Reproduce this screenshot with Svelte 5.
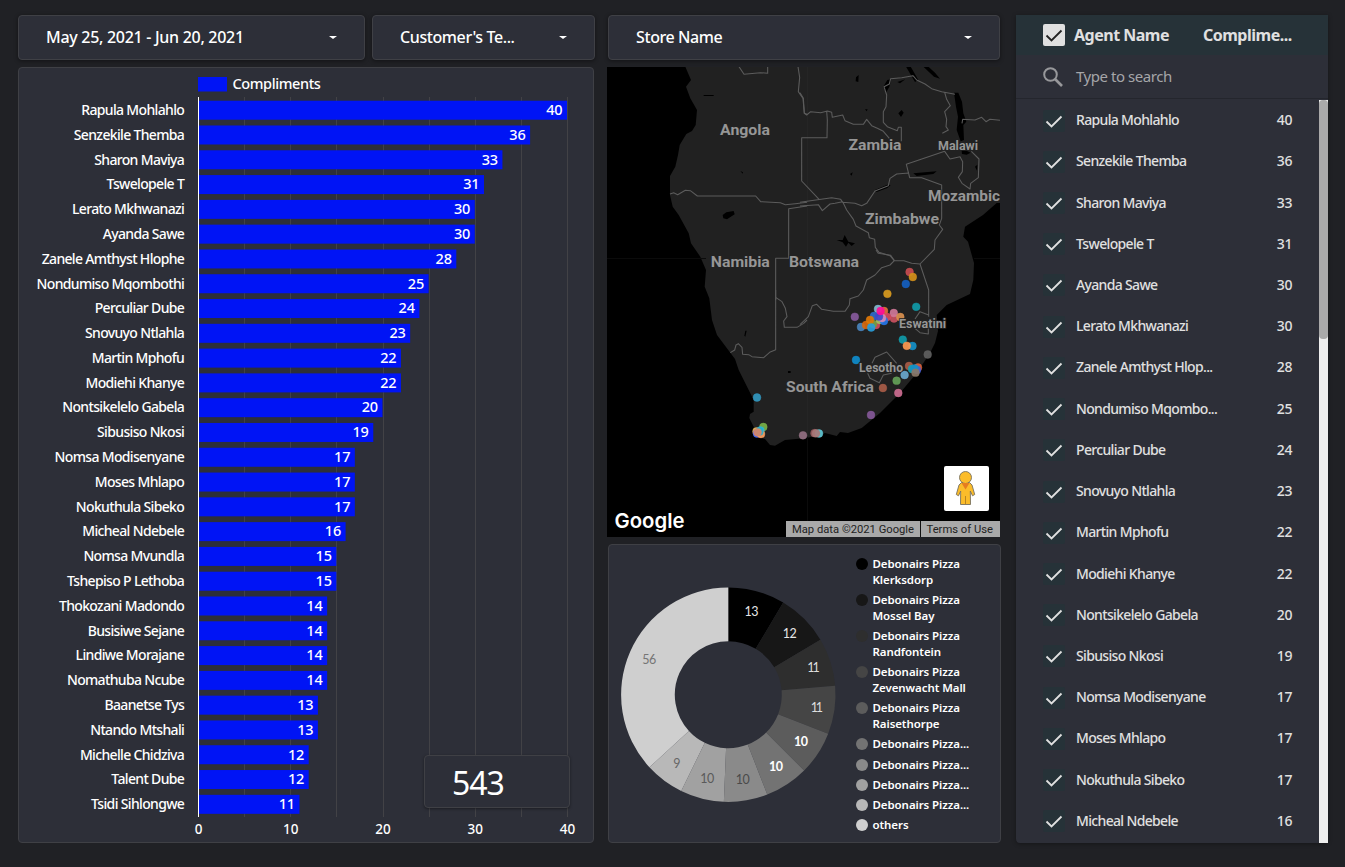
<script>
  const bars = [
    ['Rapula Mohlahlo', 40], ['Senzekile Themba', 36], ['Sharon Maviya', 33], ['Tswelopele T', 31],
    ['Lerato Mkhwanazi', 30], ['Ayanda Sawe', 30], ['Zanele Amthyst Hlophe', 28], ['Nondumiso Mqombothi', 25],
    ['Perculiar Dube', 24], ['Snovuyo Ntlahla', 23], ['Martin Mphofu', 22], ['Modiehi Khanye', 22],
    ['Nontsikelelo Gabela', 20], ['Sibusiso Nkosi', 19], ['Nomsa Modisenyane', 17], ['Moses Mhlapo', 17],
    ['Nokuthula Sibeko', 17], ['Micheal Ndebele', 16], ['Nomsa Mvundla', 15], ['Tshepiso P Lethoba', 15],
    ['Thokozani Madondo', 14], ['Busisiwe Sejane', 14], ['Lindiwe Morajane', 14], ['Nomathuba Ncube', 14],
    ['Baanetse Tys', 13], ['Ntando Mtshali', 13], ['Michelle Chidziva', 12], ['Talent Dube', 12], ['Tsidi Sihlongwe', 11]
  ];
  const x0 = 198.5, unit = 9.225, step = 24.79;
  const cy = (i) => 110 + i * step;

  const agents = [
    ['Rapula Mohlahlo', 40], ['Senzekile Themba', 36], ['Sharon Maviya', 33], ['Tswelopele T', 31],
    ['Ayanda Sawe', 30], ['Lerato Mkhwanazi', 30], ['Zanele Amthyst Hlop...', 28], ['Nondumiso Mqombo...', 25],
    ['Perculiar Dube', 24], ['Snovuyo Ntlahla', 23], ['Martin Mphofu', 22], ['Modiehi Khanye', 22],
    ['Nontsikelelo Gabela', 20], ['Sibusiso Nkosi', 19], ['Nomsa Modisenyane', 17], ['Moses Mhlapo', 17],
    ['Nokuthula Sibeko', 17], ['Micheal Ndebele', 16]
  ];

  const stores = [
    { n: 13, c: '#000000', t: '#e6e6e6', l: ['Debonairs Pizza', 'Klerksdorp'] },
    { n: 12, c: '#171717', t: '#e6e6e6', l: ['Debonairs Pizza', 'Mossel Bay'] },
    { n: 11, c: '#2e2e2e', t: '#dedede', l: ['Debonairs Pizza', 'Randfontein'] },
    { n: 11, c: '#454545', t: '#dedede', l: ['Debonairs Pizza', 'Zevenwacht Mall'] },
    { n: 10, c: '#5c5c5c', t: '#ffffff', b: true, l: ['Debonairs Pizza', 'Raisethorpe'] },
    { n: 10, c: '#737373', t: '#ffffff', b: true, l: ['Debonairs Pizza...'] },
    { n: 10, c: '#8a8a8a', t: '#4a4a4a', l: ['Debonairs Pizza...'] },
    { n: 10, c: '#a1a1a1', t: '#5a5a5a', l: ['Debonairs Pizza...'] },
    { n: 9, c: '#b8b8b8', t: '#666666', l: ['Debonairs Pizza...'] },
    { n: 56, c: '#cfcfcf', t: '#757575', l: ['others'] }
  ];
  const total = stores.reduce((s, d) => s + d.n, 0);
  const pt = (r, a) => [728.3 + r * Math.sin(a), 694.7 - r * Math.cos(a)];
  let acc = 0;
  const slices = stores.map((d) => {
    const a = (acc / total) * 2 * Math.PI;
    acc += d.n;
    const b = (acc / total) * 2 * Math.PI;
    const big = b - a > Math.PI ? 1 : 0;
    const R = 107.2, r = 53.5;
    return {
      ...d,
      d: `M${pt(R, a)}A${R} ${R} 0 ${big} 1 ${pt(R, b)}L${pt(r, b)}A${r} ${r} 0 ${big} 0 ${pt(r, a)}Z`,
      p: pt(d.n === 11 ? 88.5 : 86.6, (a + b) / 2)
    };
  });

  const places = [
    ['Angola', 745, 134.7, 50, 15], ['Zambia', 875, 150, 53, 15], ['Malawi', 958, 149.5, 40, 12],
    ['Zimbabwe', 902, 223.5, 74, 15], ['Namibia', 740.3, 266.5, 59, 15],
    ['Botswana', 824, 267, 70, 15], ['Eswatini', 922.5, 328, 47, 12], ['Lesotho', 881, 371.5, 44, 12],
    ['South Africa', 830, 392, 88, 15]
  ];

  const dots = [
    [909.6, 272, '#c84c50'], [912.8, 277, '#d4901a'], [905.8, 284, '#1560c0'], [887.4, 293.8, '#d99b20'],
    [854.8, 316.8, '#875a9c'], [916.2, 306.8, '#109aa8'], [894, 318.5, '#c85060'], [893.8, 313, '#d07898'],
    [900.3, 317, '#d9904f'], [861, 327, '#4a84bd'], [884, 311, '#e0703c'], [887, 317, '#d84a60'],
    [876, 325, '#d04a60'], [866, 325, '#d9680c'], [873, 324, '#70a040'], [878, 309, '#85b8d0'],
    [880, 320, '#9cc060'], [884, 321, '#2575e8'], [874, 316, '#2f6cc8'], [870, 320, '#e07808'],
    [871.2, 327.5, '#2a9cd8'], [882, 318, '#d58ab8'], [879, 316.5, '#4048c8'], [880.6, 311, '#ff0c98'],
    [902.8, 339.6, '#109aa8'], [912.5, 346, '#1590c8'], [906.8, 345.8, '#ff9a50'], [927.7, 354.5, '#606060'],
    [856, 360, '#0f8ccc'], [909, 366, '#a85c48'], [918, 367.5, '#d8603c'], [912, 369, '#18a0b0'],
    [917, 370, '#4060d8'], [914.5, 368.5, '#1590c8'], [915.5, 372.7, '#8a7868'], [904.6, 375, '#6aa8cc'],
    [896.6, 380.7, '#64a058'], [882.9, 388, '#a85c48'], [898.3, 393, '#cc6c90'], [871, 415, '#845898'],
    [757, 397.5, '#3298c0'], [763.3, 427, '#78b048'], [756.5, 431.5, '#e8b858'], [760.5, 430.5, '#2fb4d8'],
    [757, 433.5, '#5070f8'], [761, 434, '#ffa060'], [759.5, 431.5, '#20b0d0'], [757.6, 432.3, '#d88468'],
    [803, 435.3, '#927082'], [814.5, 433.2, '#985c60'], [819, 433.5, '#60c8d4'], [816, 433.3, '#a87878']
  ];
</script>

<main>
  <section class="left">
    <div class="filters">
      <div class="filter date"><span>May 25, 2021 - Jun 20, 2021</span><i></i></div>
      <div class="filter tel"><span>Customer's Te...</span><i></i></div>
    </div>
    <div class="panel chart">
      <svg width="574" height="774" viewBox="19 68 574 774">
        {#each [5, 10, 15, 20, 25, 30, 35, 40] as g}
          <rect x={Math.round(x0 + g * unit - 0.5)} y="97" width="1" height="720" fill="#424246" />
        {/each}
        {#each bars as [name, n], i}
          <rect x="198" y={cy(i) - 9.3} width={n * unit} height="19" fill="#0014f5" />
          <text x="184.2" y={cy(i) + 5} class="lab end">{name}</text>
          <text x={x0 + n * unit - 5} y={cy(i) + 5} class="val end">{n}</text>
        {/each}
        <rect x="198" y="97" width="1" height="720" fill="#fff" />
        <rect x="198" y="77" width="29" height="14.5" fill="#0014f5" />
        <text x="232.5" y="89" class="leg">Compliments</text>
        {#each [0, 10, 20, 30, 40] as g}
          <text x={x0 + g * unit} y="834" class="lab mid">{g}</text>
        {/each}
      </svg>
      <div class="score"><span>543</span></div>
    </div>
  </section>

  <section class="center">
    <div class="filter store"><span>Store Name</span><i></i></div>
    <div class="map">
      <svg width="393" height="470" viewBox="607 67 393 470">
        <rect x="607" y="67" width="393" height="470" fill="#000" />
        <path fill="#212121" d="M685.3 66.7L691 80 686 86.7 690.3 98.3 697 110 695.7 125 692 131 686.3 134 679.7 145 678 155 675.3 166.7 670 176 670 195 672.7 206.7 678.7 215 688.7 233.3 691 243.3 700.3 256.7 706 270 704.7 286.7 709.3 298.3 712 320 717 335 730.3 352.7 735 359 738.7 370 748.7 390 753.7 400 753.7 411.7 750 414 749.3 418 753.7 426.7 754 436 765 439 770 445 775 445.7 785 440 807 438 825 433 836.7 436 840 432 848 433 861.7 428 880 413 900 393 916.7 373 930 353 935 343 938 331 936.7 315 946.7 305 970 294 973.3 280 974 263 968 241.7 963.3 236.7 965 226.7 983 215 996.7 203 1000 203 1000 66Z" />
        <path stroke="#0b0b0b" d="M807.5 437V537M607 258.5H706M974 258.5H1000" />
        <path stroke="#252525" d="M807.5 67V437" />
        <g transform="translate(607 60) scale(.33333)">
          <path class="water" d="M347 465L358 457 380 453 383 463 360 478 349 475ZM290 105H320V108H290ZM400 333L408 337 407 341Z" />
          <path class="border" d="M396 20L411 43 460 38 482 40V20M573 20L578 52 574 95 588 115 592 160 600 163M189 402L200 398 212 404 235 391 250 392 271 408H446L461 425 520 428 535 434 565 431 600 427M600 438L545 446V595H506V720" />
        </g>
        <g transform="translate(800 60) scale(.33333)">
          <path class="water" d="M318 20L345 66 355 60 332 20ZM370 20L402 50 420 56 405 38 385 20ZM250 80L262 60 274 58 268 80 258 98ZM462 98L475 98 486 125 490 160 499 185 490 195 492 240 482 244 470 210 474 170 468 140ZM295 160L305 150 311 158 303 171ZM225 390L262 374 272 376 262 384 230 396ZM340 340L410 334 400 342 350 348ZM110 540L128 540 134 525 145 545 165 550 155 558 145 548 138 560 128 547ZM168 52L176 45 175 66 167 64ZM525 320L532 314 531 332ZM195 148L203 148 200 154ZM292 66L316 58 300 70ZM484 265L512 278 500 284 486 282ZM150 342L158 337 155 347Z" />
          <path class="border" d="M0 98L10 115 13 160 20 165 32 155 62 158 82 153 95 157 97 172 128 165 135 182 160 193 190 193 200 178 215 197 232 205 250 214 268 235M80 153L82 180 81 233H5V363L58 419M0 427L95 413 122 418 128 427 165 430 185 437 200 430 225 393 265 377 270 355 290 342 327 339M0 438L55 434 67 452 90 432 105 430 128 425 140 450 160 478 168 498 205 518 208 533 224 538 226 562 237 577 270 587 283 602 312 602 335 610 360 612 403 568 405 540 428 508 418 495 425 475V375L365 353H329L319 313 434 274 450 297 480 290 488 305 487 335 475 352 486 370 510 387 512 370 535 353 537 297 514 274M339 47L350 60 375 72 395 86 425 95 465 103M434 97L440 118 451 137 434 155 440 178 438 200 445 210 427 220M339 47L305 53 272 56 268 72 252 80 260 105 258 140 250 155V187L262 200 292 212 295 202H304V244M486 190L488 178 525 180 545 172 558 185 570 178 600 181M283 602L270 615 245 623 225 645 200 660 190 690 175 708 150 716" />
        </g>
        <g transform="translate(607 290) scale(.33333)">
          <path class="water" d="M415 122L419 122 415 140 412 137ZM543 243H551V249H543Z" />
          <path class="border" d="M370 188L383 180 387 165 394 161 405 172 407 193 425 194 435 200 470 203 488 187 506 179V0M506 22L525 35 535 55 540 80 530 93 532 112 570 112 590 100 600 90" />
        </g>
        <g transform="translate(800 250) scale(.33333)">
          <path class="border" d="M228 0L235 10 272 16 283 32M150 145L148 165 135 184H100L65 178 50 163 37 167 25 200 0 224M360 42L386 120 386 200M345 207L360 185 386 195M345 235L360 248 385 252V230M203 370L210 385 238 398 250 375 275 370M216 340L225 322 260 306 290 340" />
        </g>
        {#each dots as [x, y, c]}
          <circle cx={x} cy={y} r="3.9" fill={c} stroke={c} stroke-opacity=".6" stroke-width=".7" fill-opacity=".92" />
        {/each}
        {#each places as [t, x, y, w, s]}
          <text {x} {y} class="place" font-size={s} textLength={w} lengthAdjust="spacingAndGlyphs">{t}</text>
        {/each}
        <text x="928" y="200.5" class="place begin" font-size="15" textLength="72" lengthAdjust="spacingAndGlyphs">Mozambic</text>
        <text x="614.5" y="528" class="google" textLength="70" lengthAdjust="spacingAndGlyphs">Google</text>
        <rect x="786" y="521" width="214" height="16" fill="#a9a9a9" />
        <rect x="920" y="521" width="1" height="16" fill="#111" />
        <text x="792" y="533" class="attr" textLength="122" lengthAdjust="spacingAndGlyphs">Map data ©2021 Google</text>
        <text x="926.5" y="533" class="attr" textLength="66.5" lengthAdjust="spacingAndGlyphs">Terms of Use</text>
        <rect x="944" y="466" width="45" height="45" rx="2" fill="#fff" />
        <g fill="#fbbc2a" stroke="#77705f" stroke-width=".9">
          <path d="M961.5 482.5H969.5L972 485 974.7 494.5 972.5 495.8 970.3 491 970.5 504.5H960.5L960.7 491 958.5 495.8 956.3 494.5 959 485Z" />
          <circle cx="965.5" cy="477.5" r="6" />
        </g>
        <path d="M961.5 483H969.5L965.5 489.5Z" fill="#e57d20" />
        <path d="M965.5 496V504.5" stroke="#b98520" />
      </svg>
    </div>
    <div class="panel pie">
      <svg width="240" height="296" viewBox="609 545 240 296">
        {#each slices as s}
          <path d={s.d} fill={s.c} />
          <text x={s.p[0]} y={s.p[1] + 4.3} fill={s.t} class="num" class:tight={s.n === 11} font-weight={s.b ? 700 : 400}>{s.n}</text>
        {/each}
      </svg>
      <ul>
        {#each stores as s}
          <li><b style:background={s.c}></b><span>{s.l[0]}{#if s.l[1]}<br />{s.l[1]}{/if}</span></li>
        {/each}
      </ul>
    </div>
  </section>

  <section class="agents">
    <header>
      <div class="box on"><svg viewBox="0 0 22 22"><path d="M3.5 11.5L8.5 16.5 18.5 6.5" /></svg></div>
      <strong>Agent Name</strong>
      <strong class="metric">Complime...</strong>
    </header>
    <div class="search">
      <svg width="20" height="20" viewBox="0 0 20 20" fill="none" stroke="#97989b" stroke-width="2"><circle cx="7.5" cy="7.5" r="6.3" /><path d="M12 12L19 19" stroke-width="2.6" /></svg>
      <span>Type to search</span>
    </div>
    <div class="list">
      <div class="rows">
        {#each agents as [name, n]}
          <div class="row">
            <div class="box"><svg viewBox="0 0 22 22"><path d="M3.5 11.5L8.5 16.5 18.5 6.5" /></svg></div>
            <span class="name">{name}</span>
            <span class="count">{n}</span>
          </div>
        {/each}
      </div>
      <div class="track"><div class="thumb"></div></div>
    </div>
  </section>
</main>

<style>
  :global(body) { background: #202125; }
  main {
    box-sizing: border-box; width: 1345px; height: 867px; padding: 15px 17px 24px 18px;
    display: flex; background: #202125; color: #fff; overflow: hidden;
    font-family: "Noto Sans", "Open Sans", sans-serif;
  }
  .left { width: 577px; margin-right: 12px; display: flex; flex-direction: column; gap: 7px; }
  .filters { display: flex; gap: 7px; }
  .filter {
    box-sizing: border-box; height: 45px; padding: 0 27px; border: 1px solid #3f4045; border-radius: 4px;
    background: #2d2f38; display: flex; align-items: center; justify-content: space-between;
    font-size: 16px; font-weight: 500; letter-spacing: -.4px; box-shadow: 0 1px 4px rgba(0, 0, 0, .45);
  }
  .filter.date { letter-spacing: -.29px; }
  .filter span { position: relative; top: -1px; }
  .filter i { border: 4px solid transparent; border-top: 3px solid #fff; border-bottom: 0; }
  .date { width: 347px; }
  .tel { width: 223px; }
  .panel { box-sizing: border-box; border: 1px solid #3f4045; border-radius: 4px; background: #2d2f38; }
  .chart { width: 576px; height: 776px; position: relative; }
  svg { display: block; }
  .lab { font-size: 14px; font-weight: 500; fill: #fff; letter-spacing: -.66px; }
  .val { font-size: 14.5px; font-weight: 500; fill: #fff; letter-spacing: -.15px; }
  .leg { font-size: 14.5px; font-weight: 500; fill: #fff; letter-spacing: -.4px; }
  .end { text-anchor: end; }
  .mid { text-anchor: middle; font-size: 13.5px; letter-spacing: 0; }
  .score {
    position: absolute; left: 405px; top: 687px; box-sizing: border-box; width: 146px; height: 53px;
    border: 1px solid #3f4045; border-radius: 4px; background: #2d2f38; font-size: 32px; line-height: 53px;
    padding-left: 27px; letter-spacing: -1px; box-shadow: 0 1px 3px rgba(0, 0, 0, .4);
  }
  .center { width: 394px; margin-right: 15px; display: flex; flex-direction: column; gap: 7px; }
  .store { margin: 0 1px; }
  .map { height: 470px; }
  .border { fill: none; stroke: #5c5c5c; stroke-width: 3.2; stroke-linejoin: round; }
  .water { fill: #000; }
  .place {
    font-family: Roboto, sans-serif; font-weight: 700; fill: #969696; text-anchor: middle;
    stroke: #212121; stroke-width: 1.6; paint-order: stroke;
  }
  .begin { text-anchor: start; }
  .google { font-family: Inter, sans-serif; font-weight: 600; font-size: 20.5px; fill: #fff; }
  .attr { font-family: Roboto, sans-serif; font-size: 11px; fill: #222; }
  .num { font-family: Lato, sans-serif; font-size: 12.5px; text-anchor: middle; letter-spacing: -.5px; }
  .tight { letter-spacing: -2px; }
  .pie { margin-left: 1px; width: 393px; height: 299px; display: flex; }
  ul { list-style: none; margin: 0; padding: 11px 0 0 7px; display: flex; flex-direction: column; gap: 4.1px; }
  li { display: flex; gap: 4.5px; font-size: 11.5px; line-height: 16px; font-weight: 600; letter-spacing: -.08px; white-space: nowrap; }
  li b { width: 12px; height: 12px; border-radius: 50%; margin-top: 2px; }
  .agents { width: 312px; height: 828px; background: #2d2f38; box-shadow: 0 1px 4px rgba(0, 0, 0, .35); border-radius: 0 0 4px 4px; }
  header { height: 40px; background: #263238; display: flex; align-items: center; padding-left: 27px; font-size: 16px; letter-spacing: -.5px; color: #e0e0e0; }
  header strong { margin-left: 9px; width: 120px; font-weight: 700; }
  .box { width: 22px; height: 22px; border-radius: 2px; background: #263238; flex: none; }
  .row .box { position: relative; top: 1px; }
  .box.on { background: #e0e0e0; }
  .box path { fill: none; stroke: #e0e0e0; stroke-width: 1.8; }
  .box.on path { stroke: #222; }
  .search { height: 44px; box-sizing: border-box; border-bottom: 1px solid #24262d; display: flex; align-items: center; gap: 13px; padding-left: 27px; font-size: 15px; letter-spacing: -.45px; color: #a5a6a9; }
  .search span { position: relative; top: -1px; }
  .list { display: flex; height: 744px; justify-content: space-between; }
  .rows { width: 276px; }
  .row { height: 41.23px; display: flex; align-items: center; padding-left: 27px; font-size: 14px; letter-spacing: -.66px; font-weight: 500; color: #e0e0e0; }
  .name { margin-left: 11px; flex: 1; }
  .count { letter-spacing: -.4px; }
  .track { width: 9px; margin-top: 1px; background: #eee; height: 743px; }
  .thumb { height: 239px; background: #aaa; border-radius: 4px; }
</style>
